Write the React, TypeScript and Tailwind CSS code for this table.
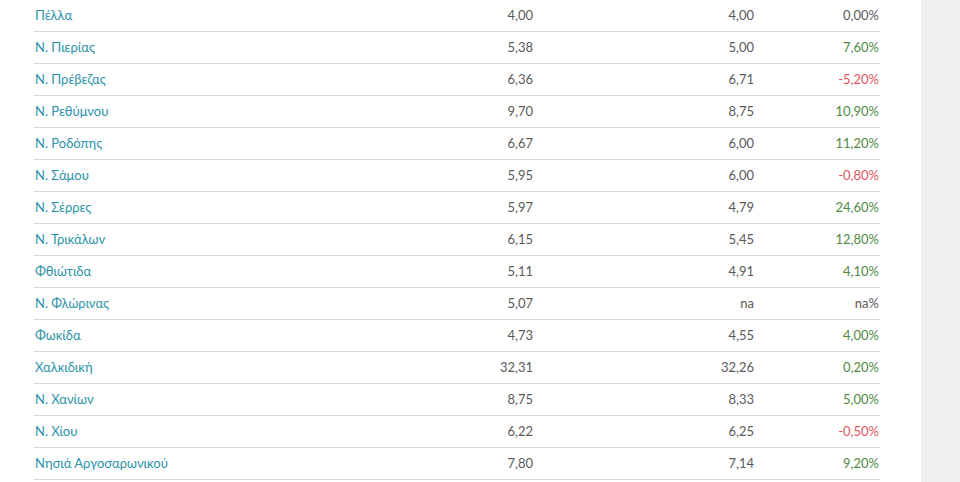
import React from 'react'

interface Row {
  name: string
  prev: string
  curr: string
  change: string
}

const ROWS: Row[] = [
  { name: 'Πέλλα', prev: '4,00', curr: '4,00', change: '0,00%' },
  { name: 'Ν. Πιερίας', prev: '5,38', curr: '5,00', change: '7,60%' },
  { name: 'Ν. Πρέβεζας', prev: '6,36', curr: '6,71', change: '-5,20%' },
  { name: 'Ν. Ρεθύμνου', prev: '9,70', curr: '8,75', change: '10,90%' },
  { name: 'Ν. Ροδόπης', prev: '6,67', curr: '6,00', change: '11,20%' },
  { name: 'Ν. Σάμου', prev: '5,95', curr: '6,00', change: '-0,80%' },
  { name: 'Ν. Σέρρες', prev: '5,97', curr: '4,79', change: '24,60%' },
  { name: 'Ν. Τρικάλων', prev: '6,15', curr: '5,45', change: '12,80%' },
  { name: 'Φθιώτιδα', prev: '5,11', curr: '4,91', change: '4,10%' },
  { name: 'Ν. Φλώρινας', prev: '5,07', curr: 'na', change: 'na%' },
  { name: 'Φωκίδα', prev: '4,73', curr: '4,55', change: '4,00%' },
  { name: 'Χαλκιδική', prev: '32,31', curr: '32,26', change: '0,20%' },
  { name: 'Ν. Χανίων', prev: '8,75', curr: '8,33', change: '5,00%' },
  { name: 'Ν. Χίου', prev: '6,22', curr: '6,25', change: '-0,50%' },
  { name: 'Νησιά Αργοσαρωνικού', prev: '7,80', curr: '7,14', change: '9,20%' },
]

function changeColor(change: string) {
  if (change.startsWith('-')) return 'text-[#e0555b]'
  if (change.startsWith('0,00') || change.startsWith('na')) return 'text-[#5a5a5a]'
  return 'text-[#4f8a45]'
}

export default function App() {
  return (
    <div className="flex h-[482px] w-[960px] overflow-hidden bg-white font-['Lato','Noto_Sans',sans-serif] text-[13px]">
      <div className="w-[921px] pl-[34px]">
        <div className="w-[846px]">
          {ROWS.map((row) => (
            <div
              key={row.name}
              className="grid h-[32px] grid-cols-[399px_100px_221px_126px] items-center border-b border-[#d9d9d9] pt-px"
            >
              <span className="pl-px text-[#2a93a8]">{row.name}</span>
              <span className="text-right text-[#5a5a5a]">{row.prev}</span>
              <span className="text-right text-[#5a5a5a]">{row.curr}</span>
              <span className={`pr-px text-right ${changeColor(row.change)}`}>{row.change}</span>
            </div>
          ))}
        </div>
      </div>
      <div className="flex-1 bg-[#efefef]" />
    </div>
  )
}
